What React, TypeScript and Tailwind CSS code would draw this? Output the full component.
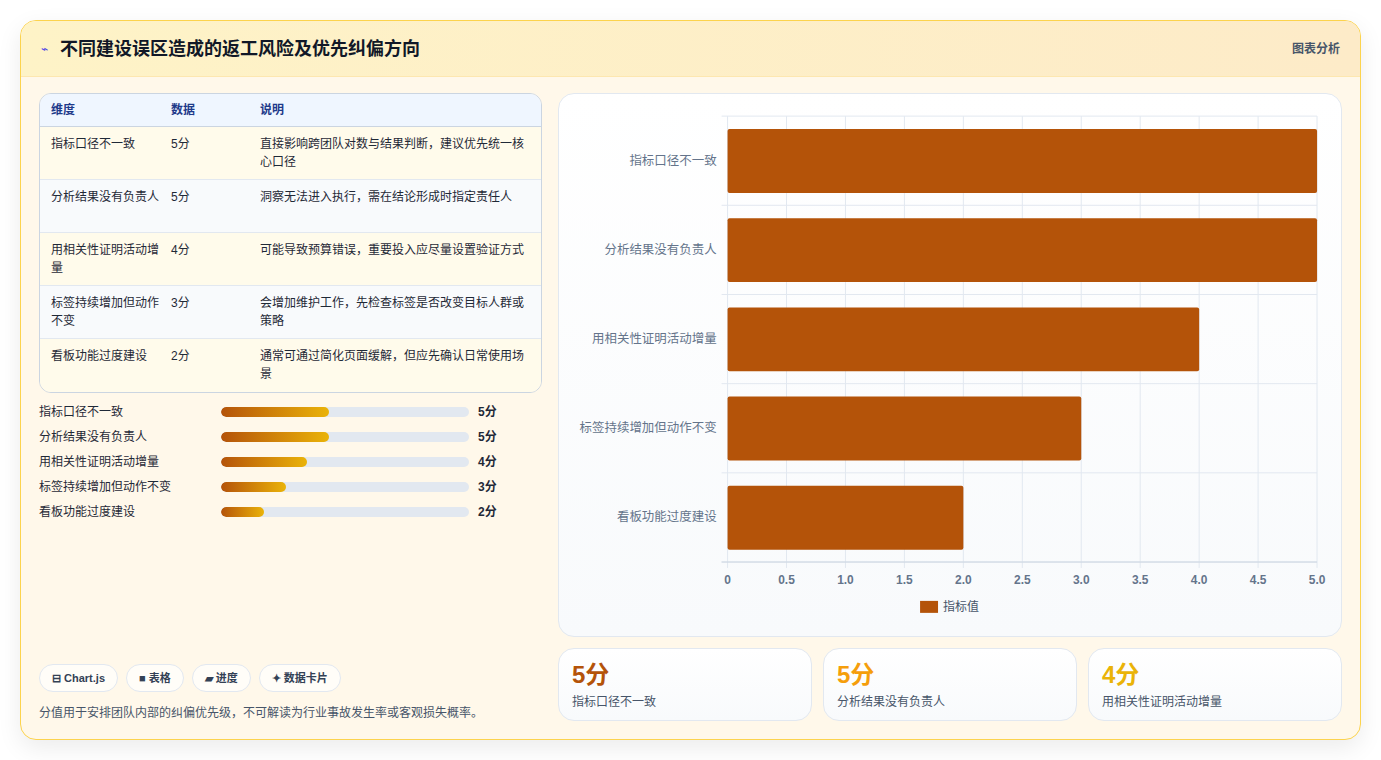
import React from 'react';

const rows = [
  { name: '指标口径不一致', score: 5, note: '直接影响跨团队对数与结果判断，建议优先统一核心口径', bg: 'bg-[#fffbeb]' },
  { name: '分析结果没有负责人', score: 5, note: '洞察无法进入执行，需在结论形成时指定责任人', bg: 'bg-[#f8fafc]' },
  { name: '用相关性证明活动增量', score: 4, note: '可能导致预算错误，重要投入应尽量设置验证方式', bg: 'bg-[#fffbeb]' },
  { name: '标签持续增加但动作不变', score: 3, note: '会增加维护工作，先检查标签是否改变目标人群或策略', bg: 'bg-[#f8fafc]' },
  { name: '看板功能过度建设', score: 2, note: '通常可通过简化页面缓解，但应先确认日常使用场景', bg: 'bg-[#fffbeb]' },
];

function Chart() {
  const L = 169, R = 760, T = 22, B = 469;
  const band = (B - T) / 5;
  const unit = (R - L) / 5;
  const ticks = ['0', '0.5', '1.0', '1.5', '2.0', '2.5', '3.0', '3.5', '4.0', '4.5', '5.0'];
  return (
    <svg viewBox="0 0 784 543" className="w-full h-full" style={{ fontFamily: '"Liberation Sans", "Noto Sans CJK SC", sans-serif' }}>
      {ticks.map((_, i) => (
        <line key={i} x1={L + i * unit / 2} x2={L + i * unit / 2} y1={T} y2={B + 6} stroke="#e2e8f0" strokeWidth="1" />
      ))}
      {[0, 1, 2, 3, 4, 5].map(i => (
        <line key={i} x1={L - 6} x2={R} y1={T + i * band} y2={T + i * band} stroke="#e2e8f0" strokeWidth="1" />
      ))}
      <line x1={L - 6} x2={R} y1={B} y2={B} stroke="#cbd5e1" />
      {rows.map((r, i) => {
        const y = T + i * band + 13;
        return (
          <g key={r.name}>
            <rect x={L} y={y} width={r.score * unit} height={64} rx="2" fill="#b45309" />
            <text x={158} y={T + i * band + band / 2 + 4} textAnchor="end" fontSize="12.5" fill="#64748b">{r.name}</text>
          </g>
        );
      })}
      {ticks.map((t, i) => (
        <text key={t} x={L + i * unit / 2} y={491} textAnchor="middle" fontSize="12" fontWeight="bold" fill="#64748b">{t}</text>
      ))}
      <rect x={362} y={508} width={18} height={12} fill="#b45309" />
      <text x={385} y={518} fontSize="12" fill="#475569">指标值</text>
    </svg>
  );
}

export default function App() {
  return (
    <div className="w-[1381px] h-[760px] bg-white p-5 text-[#1e293b]" style={{ fontFamily: '"Liberation Sans", "Noto Sans CJK SC", sans-serif' }}>
      <div className="h-[720px] rounded-2xl border border-[#fcd34d] bg-[#fff8ea] shadow-[0_8px_24px_rgba(0,0,0,0.08)] overflow-hidden flex flex-col">
        <div className="h-14 shrink-0 flex items-center justify-between px-5 bg-gradient-to-r from-[#fef3c7] to-[#fdebc8] border-b border-[#fde7b0]">
          <div className="flex items-center gap-3">
            <span className="text-[#4f46e5] text-xs">⌁</span>
            <h1 className="text-lg font-bold text-[#111827]">不同建设误区造成的返工风险及优先纠偏方向</h1>
          </div>
          <span className="text-xs font-bold text-[#475569]">图表分析</span>
        </div>
        <div className="flex-1 flex gap-4 px-[18px] pt-4 pb-[18px]">
          <div className="w-[503px] flex flex-col">
            <div className="rounded-xl border border-[#cbd5e1] overflow-hidden">
              <div className="h-[33px] flex items-center bg-[#eff6ff] border-b border-[#cbd5e1] text-xs font-bold text-[#1e3a8a]">
                <div className="w-[131px] pl-[11px]">维度</div>
                <div className="w-[89px]">数据</div>
                <div>说明</div>
              </div>
              {rows.map((r, i) => (
                <div key={r.name} className={`h-[53px] flex ${r.bg} ${i < 4 ? 'border-b border-[#e2e8f0]' : ''} text-xs text-[#1f2937] leading-[18px] pt-2`}>
                  <div className="w-[131px] pl-[11px] pr-2">{r.name}</div>
                  <div className="w-[89px]">{r.score}分</div>
                  <div className="flex-1 pr-3">{r.note}</div>
                </div>
              ))}
            </div>
            <div className="mt-[10px] flex flex-col gap-[7px]">
              {rows.map(r => (
                <div key={r.name} className="flex items-center h-[18px] text-xs text-[#1f2937]">
                  <div className="w-[182px]">{r.name}</div>
                  <div className="w-[248px] h-[10px] rounded-full bg-[#e2e8f0] overflow-hidden">
                    <div className="h-full rounded-full bg-gradient-to-r from-[#b45309] to-[#eab308]" style={{ width: `${r.score * 8.7}%` }} />
                  </div>
                  <div className="ml-[9px] font-bold">{r.score}分</div>
                </div>
              ))}
            </div>
            <div className="mt-auto flex gap-2 text-[11px] font-bold text-[#334155]">
              <span className="h-[28px] px-3 flex items-center rounded-full border border-[#e2e8f0] bg-[#fffdf8]">⊟ Chart.js</span>
              <span className="h-[28px] px-3 flex items-center rounded-full border border-[#e2e8f0] bg-[#fffdf8]">■ 表格</span>
              <span className="h-[28px] px-3 flex items-center rounded-full border border-[#e2e8f0] bg-[#fffdf8]">▰ 进度</span>
              <span className="h-[28px] px-3 flex items-center rounded-full border border-[#e2e8f0] bg-[#fffdf8]">✦ 数据卡片</span>
            </div>
            <p className="mt-[13px] text-xs text-[#475569]">分值用于安排团队内部的纠偏优先级，不可解读为行业事故发生率或客观损失概率。</p>
          </div>
          <div className="flex-1 flex flex-col gap-[11px]">
            <div className="h-[544px] rounded-2xl border border-[#e2e8f0] bg-gradient-to-b from-white to-[#f8fafc]">
              <Chart />
            </div>
            <div className="flex-1 grid grid-cols-3 gap-[11px]">
              {[
                { v: '5分', l: '指标口径不一致', c: 'text-[#b45309]' },
                { v: '5分', l: '分析结果没有负责人', c: 'text-[#f59e0b]' },
                { v: '4分', l: '用相关性证明活动增量', c: 'text-[#eab308]' },
              ].map(s => (
                <div key={s.l} className="rounded-2xl border border-[#e2e8f0] bg-gradient-to-b from-white to-[#f8fafc] px-[13px] pt-[10px]">
                  <div className={`text-2xl font-bold ${s.c}`}>{s.v}</div>
                  <div className="text-xs text-[#475569] mt-[3px]">{s.l}</div>
                </div>
              ))}
            </div>
          </div>
        </div>
      </div>
    </div>
  );
}
